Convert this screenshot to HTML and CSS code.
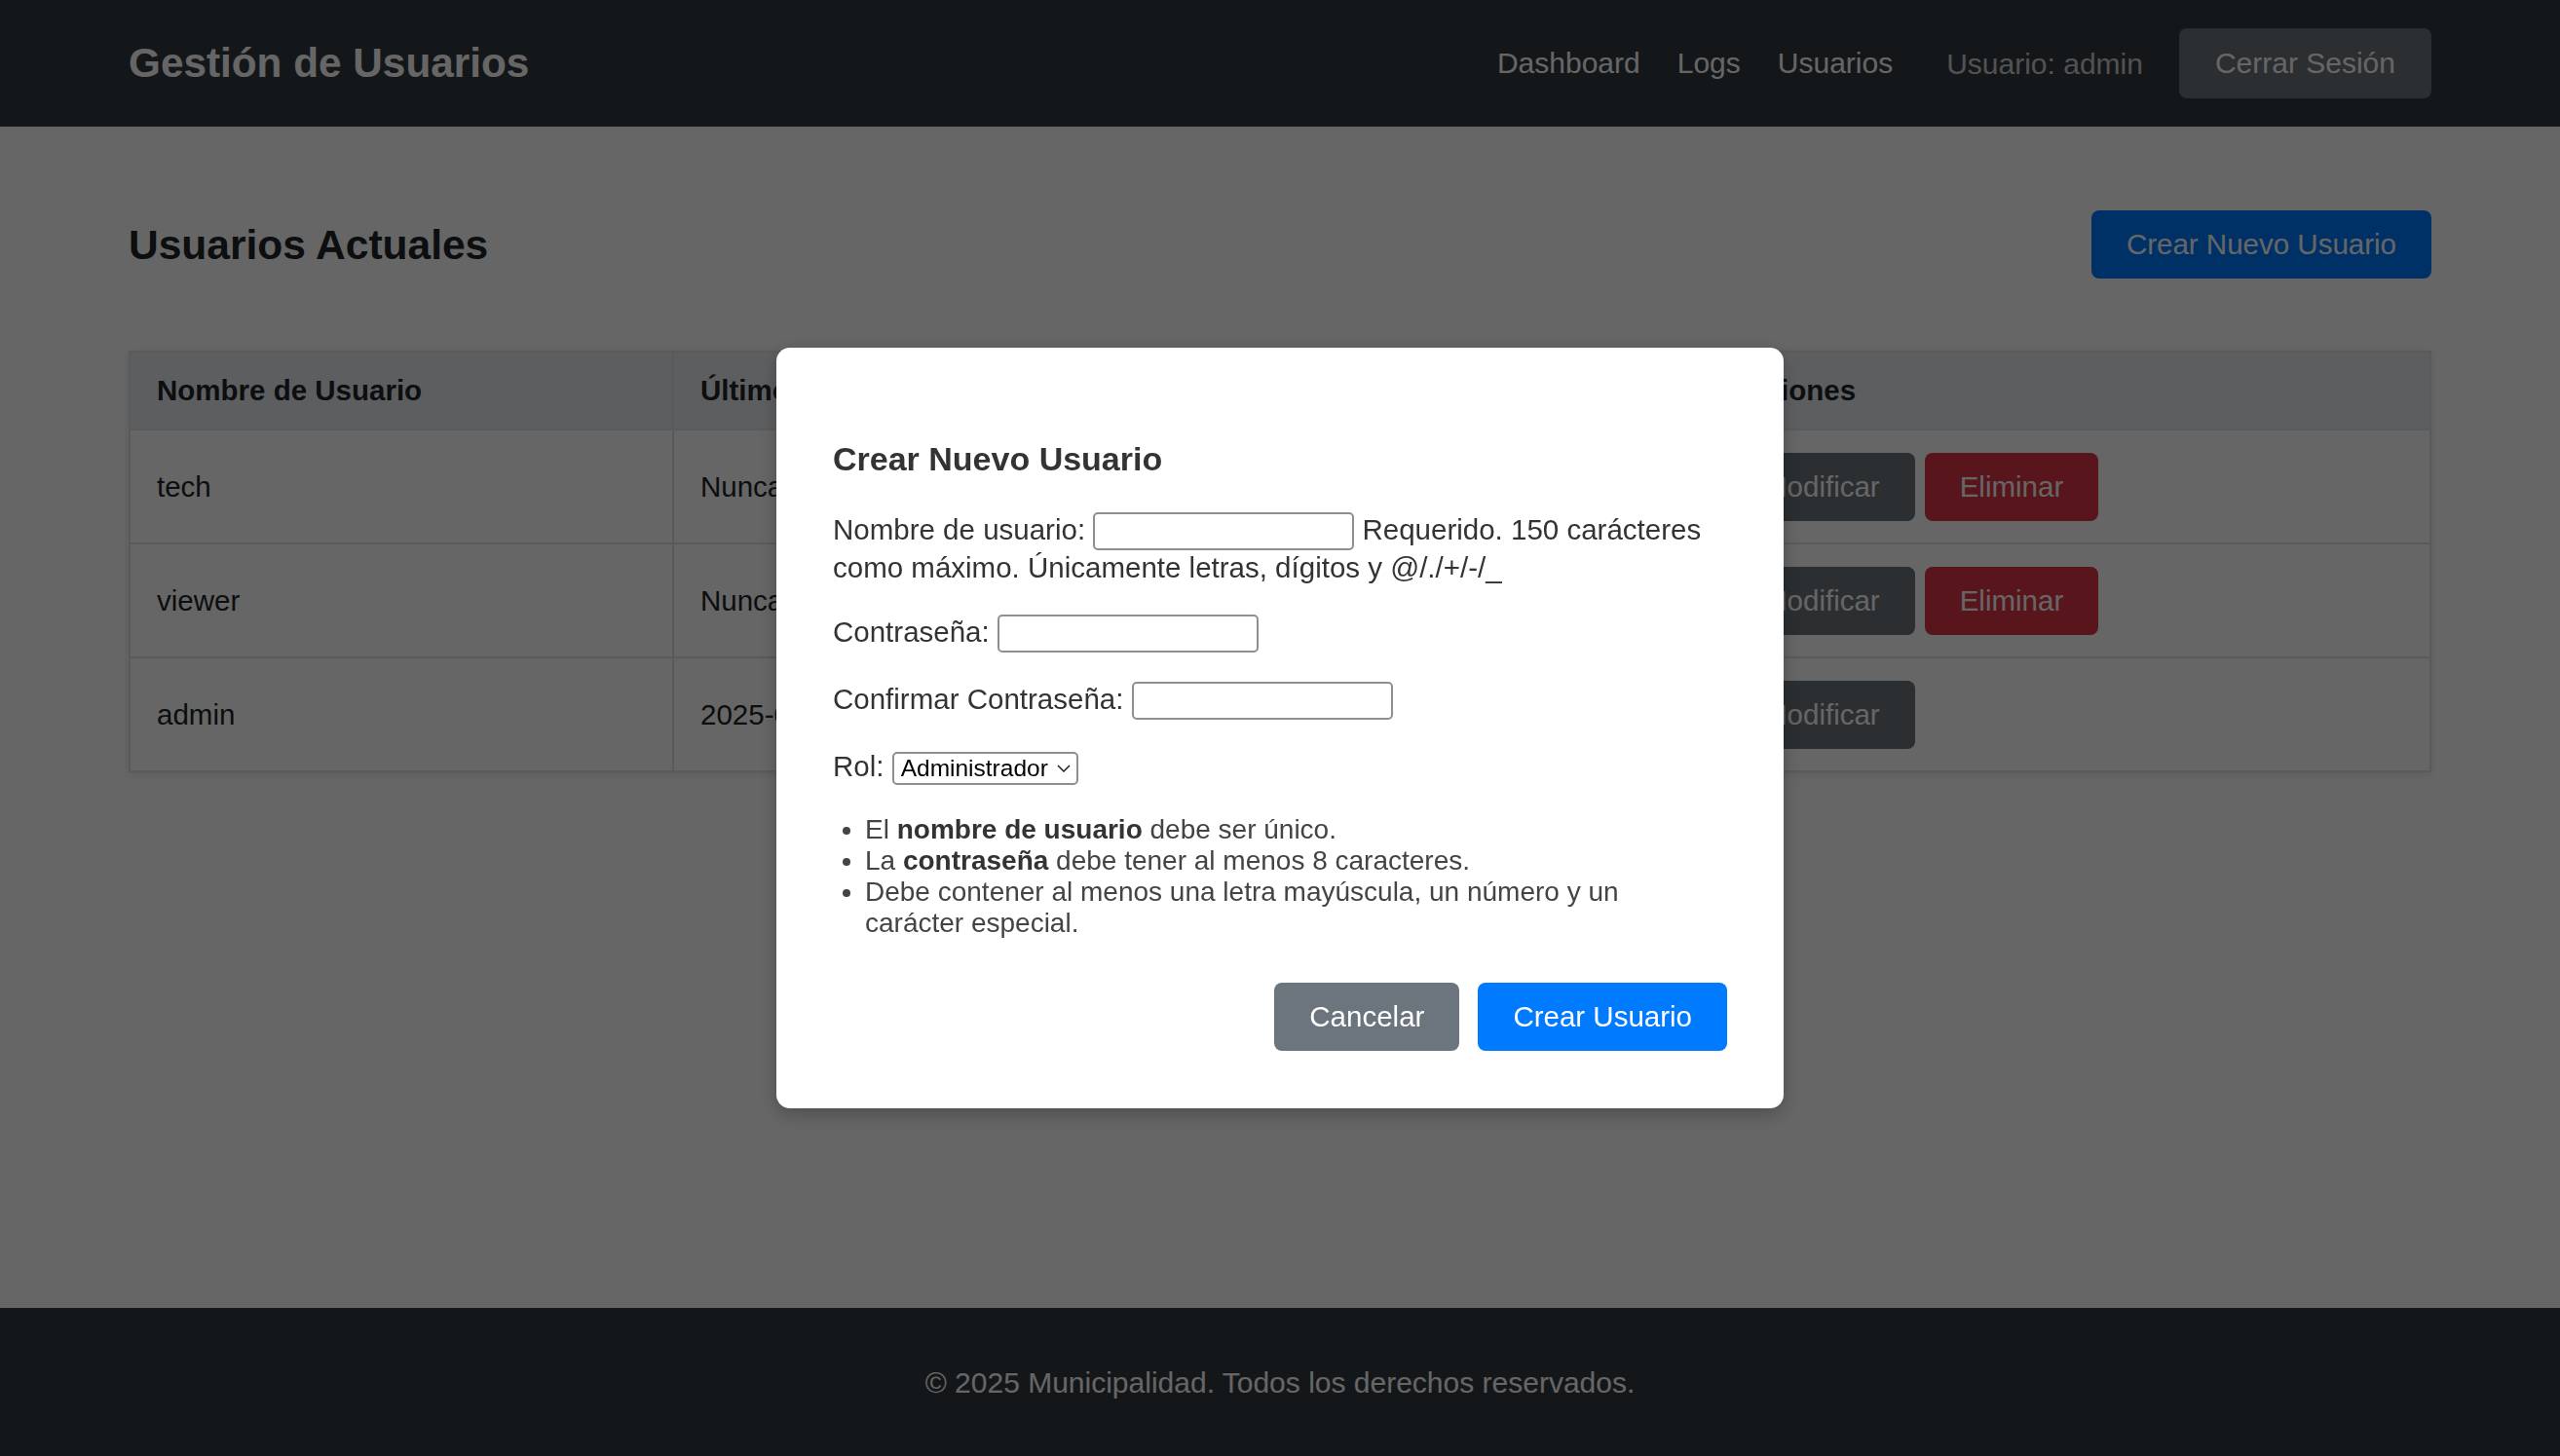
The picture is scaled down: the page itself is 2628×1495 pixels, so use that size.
FILE: index.html
```html
<!DOCTYPE html>
<html lang="es">
<head>
<meta charset="utf-8">
<title>Gestión de Usuarios</title>
<link rel="stylesheet" href="styles.css">
</head>
<body>
<nav class="navbar">
  <div class="container nav-inner">
    <a class="brand" href="#">Gestión de Usuarios</a>
    <div class="nav-right">
      <ul class="nav-links">
        <li><a href="#">Dashboard</a></li>
        <li><a href="#">Logs</a></li>
        <li><a href="#" class="active">Usuarios</a></li>
      </ul>
      <span class="user">Usuario: admin</span>
      <button class="btn btn-secondary btn-logout" type="button">Cerrar Sesión</button>
    </div>
  </div>
</nav>

<main class="container main">
  <div class="page-header">
    <h2 class="page-title">Usuarios Actuales</h2>
    <button class="btn btn-primary" type="button">Crear Nuevo Usuario</button>
  </div>

  <table class="users-table">
    <colgroup>
      <col class="col-name">
      <col class="col-last">
      <col class="col-role">
      <col class="col-actions">
    </colgroup>
    <thead>
      <tr>
        <th>Nombre de Usuario</th>
        <th>Último Acceso</th>
        <th>Rol</th>
        <th>Acciones</th>
      </tr>
    </thead>
    <tbody>
      <tr>
        <td>tech</td>
        <td>Nunca</td>
        <td>Técnico</td>
        <td><div class="actions"><button class="btn btn-secondary" type="button">Modificar</button><button class="btn btn-danger" type="button">Eliminar</button></div></td>
      </tr>
      <tr>
        <td>viewer</td>
        <td>Nunca</td>
        <td>Visualizador</td>
        <td><div class="actions"><button class="btn btn-secondary" type="button">Modificar</button><button class="btn btn-danger" type="button">Eliminar</button></div></td>
      </tr>
      <tr>
        <td>admin</td>
        <td>2025-06-10</td>
        <td>Administrador</td>
        <td><div class="actions"><button class="btn btn-secondary" type="button">Modificar</button></div></td>
      </tr>
    </tbody>
  </table>
</main>

<footer class="footer">© 2025 Municipalidad. Todos los derechos reservados.</footer>

<div class="backdrop">
  <div class="modal">
    <h3 class="modal-title">Crear Nuevo Usuario</h3>
    <form class="modal-form">
      <p class="field"><label for="id_username">Nombre de usuario:</label> <input type="text" id="id_username" class="text-input"> <span class="helptext">Requerido. 150 carácteres como máximo. Únicamente letras, dígitos y @/./+/-/_</span></p>
      <p class="field"><label for="id_password1">Contraseña:</label> <input type="password" id="id_password1" class="text-input"></p>
      <p class="field"><label for="id_password2">Confirmar Contraseña:</label> <input type="password" id="id_password2" class="text-input"></p>
      <p class="field"><label for="id_role">Rol:</label> <span class="select-box"><select id="id_role"><option>Administrador</option><option>Técnico</option><option>Visualizador</option></select><svg class="chevron" width="14" height="8" viewBox="0 0 14 8"><path d="M1 1l6 6 6-6" fill="none" stroke="#222" stroke-width="1.5"/></svg></span></p>
      <ul class="pw-help">
        <li>El <strong>nombre de usuario</strong> debe ser único.</li>
        <li>La <strong>contraseña</strong> debe tener al menos 8 caracteres.</li>
        <li>Debe contener al menos una letra mayúscula, un número y un carácter especial.</li>
      </ul>
      <div class="modal-actions">
        <button class="btn btn-secondary" type="button">Cancelar</button>
        <button class="btn btn-primary" type="button">Crear Usuario</button>
      </div>
    </form>
  </div>
</div>
</body>
</html>
```

FILE: styles.css
```css
* {
  box-sizing: border-box;
}

html,
body {
  margin: 0;
}

body {
  font-family: "Liberation Sans", Arial, sans-serif;
  font-size: 29.5px;
  line-height: 1.5;
  color: #212529;
  background: #fff;
  min-height: 100vh;
  display: flex;
  flex-direction: column;
}

.container {
  width: 100%;
  padding: 0 132px;
}

/* Navbar */
.navbar {
  flex: none;
  height: 130px;
  background: #343a40;
}

.nav-inner {
  height: 100%;
  display: flex;
  align-items: center;
  justify-content: space-between;
}

.brand {
  color: #fff;
  font-size: 42.3px;
  font-weight: 700;
  line-height: 1;
  text-decoration: none;
}

.nav-right {
  display: flex;
  align-items: center;
}

.nav-links {
  display: flex;
  gap: 38px;
  list-style: none;
  margin: 0;
  padding: 0;
}

.nav-links a {
  color: #fff;
  font-size: 30px;
  text-decoration: none;
}

.user {
  margin-left: 55px;
  font-size: 30px;
  color: rgba(255, 255, 255, 0.75);
}

/* Buttons */
.btn {
  display: inline-flex;
  align-items: center;
  justify-content: center;
  height: 70px;
  padding: 0 36px;
  border: none;
  border-radius: 8px;
  font-family: inherit;
  font-size: 29.5px;
  line-height: 1;
  color: #fff;
  cursor: pointer;
  white-space: nowrap;
}

.btn-logout {
  margin-left: 37px;
  height: 72px;
  padding: 0 37px;
  font-size: 30px;
}

.btn-primary {
  background: #007bff;
}

.btn-secondary {
  background: #6c757d;
}

.btn-danger {
  background: #dc3545;
}

/* Main */
.main {
  flex: 1;
  padding-top: 86px;
}

.page-header {
  display: flex;
  align-items: center;
  justify-content: space-between;
  margin-bottom: 74px;
}

.page-title {
  margin: 0;
  font-size: 42.5px;
  line-height: 1.2;
  font-weight: 700;
}

.users-table {
  width: 100%;
  border-collapse: collapse;
  table-layout: fixed;
  background: #fff;
  box-shadow: 0 2px 8px rgba(0, 0, 0, 0.1);
}

.col-name {
  width: 558px;
}

.col-last {
  width: 560px;
}

.col-role {
  width: 495px;
}

.users-table th,
.users-table td {
  border: 2px solid #dee2e6;
  padding: 22.5px 27px;
  text-align: left;
  vertical-align: middle;
  line-height: 44px;
  white-space: nowrap;
  overflow: hidden;
}

.users-table th {
  padding: 17px 27px;
  background: #e9ecef;
  font-weight: 700;
}

.actions {
  display: flex;
  gap: 10px;
}

/* Footer */
.footer {
  flex: none;
  height: 152px;
  display: flex;
  align-items: center;
  justify-content: center;
  background: #343a40;
  color: #fff;
  font-size: 30px;
}

/* Modal */
.backdrop {
  position: fixed;
  inset: 0;
  display: flex;
  align-items: center;
  justify-content: center;
  background: rgba(0, 0, 0, 0.6);
}

.modal {
  width: 1034px;
  padding: 58px 58px 59px;
  background: #fff;
  border-radius: 14px;
  color: #333;
  box-shadow: 0 6px 20px rgba(0, 0, 0, 0.25);
}

.modal-title {
  margin: 36px 0 35px;
  font-size: 34px;
  line-height: 40px;
  font-weight: 700;
  color: #333;
}

.modal-form {
  margin: 0;
}

.field {
  margin: 0 0 30px;
  line-height: 36px;
}

.text-input {
  vertical-align: top;
  width: 268px;
  height: 39px;
  padding: 0 6px;
  border: 2px solid #8f8f8f;
  border-radius: 5px;
  font-family: inherit;
  font-size: 24.5px;
  background: #fff;
}

.select-box {
  display: inline-flex;
  align-items: center;
  justify-content: space-between;
  vertical-align: top;
  margin-top: 3px;
  width: 191px;
  height: 34px;
  padding: 0 6px 0 7px;
  border: 2px solid #8f8f8f;
  border-radius: 5px;
  background: #fff;
}

.select-box select {
  -webkit-appearance: none;
  appearance: none;
  border: none;
  background: transparent;
  padding: 0;
  margin: 0;
  font-family: "Liberation Sans", Arial, sans-serif;
  font-size: 24.5px;
  line-height: 1;
  color: #000;
  outline: none;
}

.chevron {
  flex: none;
}

.pw-help {
  margin: 0 0 45px;
  padding: 0 40px 0 33px;
  font-size: 28px;
  line-height: 32px;
  color: #444;
}

.pw-help strong {
  color: #333;
}

.modal-actions {
  display: flex;
  justify-content: flex-end;
  gap: 19px;
}
```
